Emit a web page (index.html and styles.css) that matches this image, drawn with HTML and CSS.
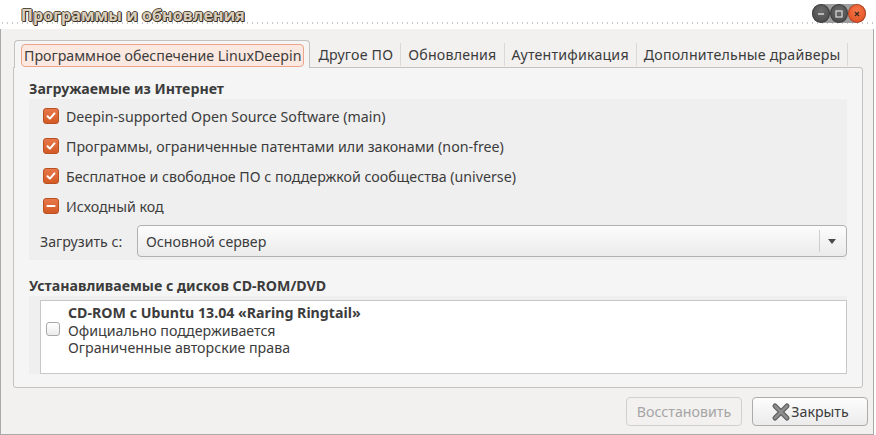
FILE: index.html
```html
<!DOCTYPE html>
<html lang="ru">
<head>
<meta charset="utf-8">
<title>Программы и обновления</title>
<link rel="stylesheet" href="styles.css">
</head>
<body>
<div class="window">
  <div class="titlebar">
    <span class="title">Программы и обновления</span>
    <div class="wm-buttons">
      <span class="wm-btn dark"><svg width="10" height="10" viewBox="0 0 10 10"><path d="M2 5h6" stroke="#dcdcdc" stroke-width="1.4"/></svg></span>
      <span class="wm-btn dark"><svg width="10" height="10" viewBox="0 0 10 10"><rect x="2" y="2" width="6" height="6" fill="none" stroke="#dcdcdc" stroke-width="1.2"/></svg></span>
      <span class="wm-btn close"><svg width="10" height="10" viewBox="0 0 10 10"><path d="M3 3l4 4M7 3l-4 4" stroke="#3a2a22" stroke-width="1.3"/></svg></span>
    </div>
  </div>
  <div class="content">
    <div class="tabs">
      <div class="tab active"><span class="focus">Программное обеспечение LinuxDeepin</span></div>
      <div class="tab">Другое ПО</div>
      <div class="tab">Обновления</div>
      <div class="tab">Аутентификация</div>
      <div class="tab last">Дополнительные драйверы</div>
    </div>
    <div class="panel">
      <div class="heading">Загружаемые из Интернет</div>
      <div class="box box1">
        <div class="row"><span class="cb on"><svg width="12" height="12" viewBox="0 0 12 12"><path d="M2.5 6.2l2.4 2.4 4.6-5.2" fill="none" stroke="#fff" stroke-width="2" stroke-linecap="round" stroke-linejoin="round"/></svg></span>Deepin-supported Open Source Software (main)</div>
        <div class="row"><span class="cb on"><svg width="12" height="12" viewBox="0 0 12 12"><path d="M2.5 6.2l2.4 2.4 4.6-5.2" fill="none" stroke="#fff" stroke-width="2" stroke-linecap="round" stroke-linejoin="round"/></svg></span>Программы, ограниченные патентами или законами (non-free)</div>
        <div class="row"><span class="cb on"><svg width="12" height="12" viewBox="0 0 12 12"><path d="M2.5 6.2l2.4 2.4 4.6-5.2" fill="none" stroke="#fff" stroke-width="2" stroke-linecap="round" stroke-linejoin="round"/></svg></span>Бесплатное и свободное ПО с поддержкой сообщества (universe)</div>
        <div class="row"><span class="cb on"><svg width="12" height="12" viewBox="0 0 12 12"><path d="M2.5 6h7" fill="none" stroke="#fff" stroke-width="2.2" stroke-linecap="round"/></svg></span>Исходный код</div>
        <div class="combo-row">
          <span class="label">Загрузить с:</span>
          <div class="combo">
            <span class="combo-text">Основной сервер</span>
            <span class="combo-sep"></span>
            <span class="combo-arrow"></span>
          </div>
        </div>
      </div>
      <div class="heading heading2">Устанавливаемые с дисков CD-ROM/DVD</div>
      <div class="box box2">
        <div class="list">
          <span class="cb off"></span>
          <div class="cd-text">
            <div class="cd-title">CD-ROM с Ubuntu 13.04 «Raring Ringtail»</div>
            <div>Официально поддерживается</div>
            <div>Ограниченные авторские права</div>
          </div>
        </div>
      </div>
    </div>
    <div class="buttons">
      <div class="btn disabled">Восстановить</div>
      <div class="btn"><svg class="x-icon" width="20" height="20" viewBox="0 0 20 20"><path d="M4 4l12 12M16 4l-12 12" stroke="#5e5e5e" stroke-width="5" stroke-linecap="round"/><path d="M4 4l12 12M16 4l-12 12" stroke="#8e8e8e" stroke-width="2.6" stroke-linecap="round"/></svg>Закрыть</div>
    </div>
  </div>
</div>
</body>
</html>
```

FILE: styles.css
```css
* { box-sizing: border-box; }
html, body {
  margin: 0;
  padding: 0;
  background: #ffffff;
}
body {
  font-family: "Noto Sans", "DejaVu Sans", sans-serif;
  font-size: 14.2px;
  color: #3c3c3c;
}
.window {
  width: 876px;
  height: 435px;
  display: flex;
  flex-direction: column;
  padding-right: 2px;
}
.titlebar {
  height: 29px;
  display: flex;
  align-items: center;
  justify-content: space-between;
  padding: 0 8px 0 21px;
  background:
    radial-gradient(circle, #c8c8c8 0.8px, transparent 1px) 0 20px / 5px 6px repeat-x,
    #ffffff;
}
.title {
  font-family: "Open Sans", sans-serif;
  font-weight: 700;
  font-size: 16px;
  color: #d9cfbc;
  letter-spacing: 0.1px;
  text-shadow: 1px 1px 0 #3c3328, -1px 0 0 #5a4e40, 0 -1px 0 #5a4e40, 1px 0 0 #3c3328, 0 1px 0 #3c3328;
}
.wm-buttons {
  display: flex;
  background: #9d9d9d;
  border-radius: 10px;
  margin-top: -2px;
}
.wm-btn {
  width: 18px;
  height: 19px;
  border-radius: 50%;
  display: flex;
  align-items: center;
  justify-content: center;
}
.wm-btn.dark {
  background: radial-gradient(circle at 50% 35%, #6b6b6b, #454545);
  border: 1px solid #3a3a3a;
}
.wm-btn.close {
  background: radial-gradient(circle at 50% 35%, #f6774a, #df4b1c);
  border: 1px solid #b4401e;
}
.content {
  flex: 1;
  background: #f2f1f0;
  border-left: 1px solid #a9a9a9;
  border-right: 1px solid #a9a9a9;
  border-bottom: 1px solid #a9a9a9;
  padding: 11px 11px 0 12px;
  display: flex;
  flex-direction: column;
}
.tabs {
  display: flex;
  height: 27px;
  align-items: stretch;
  padding-left: 1px;
  position: relative;
  z-index: 1;
}
.tab {
  display: flex;
  align-items: center;
  padding: 0 7px 0 7px;
  letter-spacing: 0.2px;
  border-right: 1px solid #dcdad8;
  margin-top: 3px;
  margin-bottom: 1px;
  white-space: nowrap;
}
.tab.active {
  letter-spacing: 0;
  margin-top: 0;
  margin-bottom: -1px;
  padding: 3px 5px 1px 6px;
  background: #f5f5f5;
  border: 1px solid #c4c2c0;
  border-bottom: none;
  border-radius: 4px 4px 0 0;
  align-items: stretch;
}
.tab.active + .tab { margin-left: 1px; }
.focus {
  display: flex;
  align-items: center;
  padding: 0 2px 0 2px;
  border: 1px solid #eda48a;
  background: #fbe8e0;
  border-radius: 4px;
}
.panel {
  width: 850px;
  height: 321px;
  background: #f5f5f5;
  border: 1px solid #c4c2c0;
  border-radius: 0 3px 3px 3px;
  padding: 11px 14px 0 15px;
  display: flex;
  flex-direction: column;
}
.heading {
  font-weight: 700;
  line-height: 20px;
  height: 20px;
}
.heading2 {
  margin-top: 16px;
}
.box {
  background: #efefef;
  width: 818px;
}
.box1 {
  height: 161px;
  padding-top: 2px;
}
.row {
  height: 30px;
  display: flex;
  align-items: center;
  padding-left: 14px;
  white-space: nowrap;
}
.cb {
  flex: none;
  width: 16px;
  height: 16px;
  border-radius: 3px;
  display: flex;
  align-items: center;
  justify-content: center;
  margin-right: 7px;
}
.cb.on {
  background: linear-gradient(#e8774a, #d45a25);
  border: 1px solid #b8501f;
}
.combo-row {
  display: flex;
  align-items: center;
  padding-left: 11px;
  margin-top: 4px;
  height: 32px;
}
.label {
  width: 97px;
}
.combo {
  width: 710px;
  height: 32px;
  border: 1px solid #b3b1af;
  border-radius: 4px;
  background: linear-gradient(#fcfcfc, #ebebeb);
  display: flex;
  align-items: center;
  padding-left: 8px;
}
.combo-text { flex: 1; }
.combo-sep {
  width: 1px;
  height: 22px;
  background: #d0cecc;
  margin-right: 8px;
}
.combo-arrow {
  width: 0;
  height: 0;
  border-left: 4.5px solid transparent;
  border-right: 4.5px solid transparent;
  border-top: 5px solid #4a4a4a;
  margin-right: 10px;
}
.box2 {
  height: 78px;
  padding: 4px 0 0 11px;
}
.list {
  height: 74px;
  width: 807px;
  background: #ffffff;
  border: 1px solid #c9c7c5;
  display: flex;
  align-items: flex-start;
  padding: 3px 0 0 5px;
}
.cb.off {
  width: 14px;
  height: 14px;
  border: 1px solid #a8a8a8;
  background: linear-gradient(#ffffff, #ececec);
  margin-right: 8px;
  margin-top: 18px;
}
.cd-text {
  line-height: 17.5px;
}
.cd-title { font-weight: 700; }
.buttons {
  display: flex;
  justify-content: flex-end;
  gap: 10px;
  margin-top: 9px;
  margin-right: -6px;
}
.btn {
  height: 29px;
  width: 116px;
  border: 1px solid #aeacaa;
  border-radius: 4px;
  background: linear-gradient(#fdfdfd, #ebebeb);
  display: flex;
  align-items: center;
  justify-content: center;
  white-space: nowrap;
}
.btn.disabled {
  color: #a5a5a5;
  border-color: #d2d0ce;
  background: #f2f1f0;
}
.x-icon { margin-right: 0; }
```
